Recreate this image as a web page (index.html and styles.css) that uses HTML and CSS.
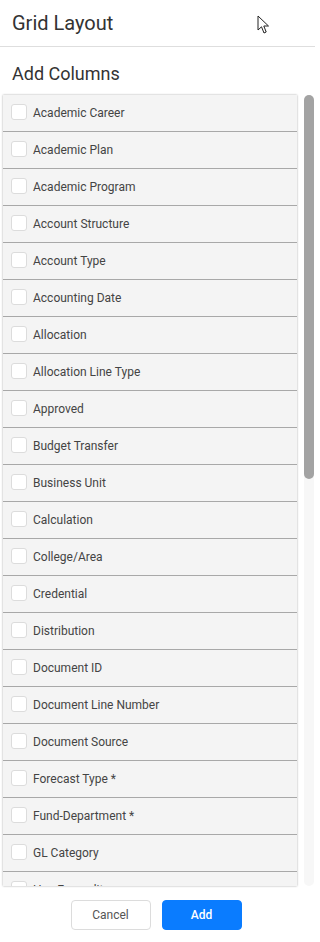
FILE: index.html
```html
<!DOCTYPE html>
<html>
<head>
<meta charset="utf-8">
<link rel="stylesheet" href="styles.css">
</head>
<body>
<div class="page">
  <header class="header">
    <h1 class="title">Grid Layout</h1>
    <svg class="cursor" width="14" height="20" viewBox="0 0 14 20"><path d="M1 1 L1 15 L4.5 11.8 L7 18 L9.2 17 L6.8 11 L11.5 11 Z" fill="#fff" stroke="#222" stroke-width="1" stroke-linejoin="round"/></svg>
  </header>
  <h2 class="subtitle">Add Columns</h2>
  <div class="listwrap">
    <ul class="list">
      <li class="row"><span class="box"></span><span class="label">Academic Career</span></li>
      <li class="row"><span class="box"></span><span class="label">Academic Plan</span></li>
      <li class="row"><span class="box"></span><span class="label">Academic Program</span></li>
      <li class="row"><span class="box"></span><span class="label">Account Structure</span></li>
      <li class="row"><span class="box"></span><span class="label">Account Type</span></li>
      <li class="row"><span class="box"></span><span class="label">Accounting Date</span></li>
      <li class="row"><span class="box"></span><span class="label">Allocation</span></li>
      <li class="row"><span class="box"></span><span class="label">Allocation Line Type</span></li>
      <li class="row"><span class="box"></span><span class="label">Approved</span></li>
      <li class="row"><span class="box"></span><span class="label">Budget Transfer</span></li>
      <li class="row"><span class="box"></span><span class="label">Business Unit</span></li>
      <li class="row"><span class="box"></span><span class="label">Calculation</span></li>
      <li class="row"><span class="box"></span><span class="label">College/Area</span></li>
      <li class="row"><span class="box"></span><span class="label">Credential</span></li>
      <li class="row"><span class="box"></span><span class="label">Distribution</span></li>
      <li class="row"><span class="box"></span><span class="label">Document ID</span></li>
      <li class="row"><span class="box"></span><span class="label">Document Line Number</span></li>
      <li class="row"><span class="box"></span><span class="label">Document Source</span></li>
      <li class="row"><span class="box"></span><span class="label">Forecast Type *</span></li>
      <li class="row"><span class="box"></span><span class="label">Fund-Department *</span></li>
      <li class="row"><span class="box"></span><span class="label">GL Category</span></li>
      <li class="row"><span class="box"></span><span class="label">Has Expenditure</span></li>
    </ul>
    <div class="track"><div class="thumb"></div></div>
  </div>
  <footer class="footer">
    <button class="btn btn-cancel">Cancel</button>
    <button class="btn btn-add">Add</button>
  </footer>
</div>
</body>
</html>
```

FILE: styles.css
```css
html, body {
  margin: 0;
  padding: 0;
  background: #fff;
}
body {
  font-family: Roboto, "Liberation Sans", Arial, sans-serif;
  color: #333;
}
.page {
  width: 315px;
  height: 942px;
  display: flex;
  flex-direction: column;
  overflow: hidden;
}
.header {
  position: relative;
  height: 46px;
  border-bottom: 1px solid #dedede;
  display: flex;
  align-items: center;
  padding: 0 12px;
  flex: none;
}
.title {
  margin: 0;
  font-size: 20px;
  font-weight: 400;
  color: #333;
  line-height: 24px;
  padding-bottom: 1px;
}
.cursor {
  position: absolute;
  left: 257px;
  top: 15px;
}
.subtitle {
  margin: 0;
  padding: 16px 12px 10px;
  font-size: 18px;
  font-weight: 400;
  line-height: 22px;
  color: #333;
  flex: none;
}
.listwrap {
  height: 791px;
  flex: none;
  display: flex;
  padding-left: 3px;
}
.list {
  list-style: none;
  margin: 0;
  padding: 0;
  width: 294px;
  height: 791px;
  overflow: hidden;
  background: #f4f4f4;
  box-shadow: 0 0 2px rgba(0, 0, 0, 0.35);
}
.track {
  width: 10px;
  margin-left: 7px;
  height: 791px;
  background: #f7f7f7;
  border-radius: 5px;
}
.thumb {
  height: 384px;
  background: #a3a3a3;
  border-radius: 5px;
}
.row {
  height: 36px;
  border-bottom: 1px solid #a8a8a8;
  display: flex;
  align-items: center;
  padding-left: 8px;
  gap: 6px;
}
.box {
  width: 14px;
  height: 14px;
  background: #fff;
  border: 1px solid #dcdcdc;
  border-radius: 3px;
  margin-top: -2px;
  flex: none;
}
.label {
  font-size: 12px;
  color: #444;
  margin-top: -1px;
}
.footer {
  flex: none;
  display: flex;
  justify-content: center;
  gap: 11px;
  padding: 14px 3px 0 0;
}
.btn {
  width: 80px;
  height: 30px;
  border-radius: 4px;
  font-family: Roboto, "Liberation Sans", Arial, sans-serif;
  font-size: 12px;
  cursor: pointer;
}
.btn-cancel {
  background: #fff;
  border: 1px solid #dcdcdc;
  color: #555;
}
.btn-add {
  background: #0a7cff;
  border: 1px solid #0a7cff;
  color: #fff;
  font-weight: 500;
}
```
